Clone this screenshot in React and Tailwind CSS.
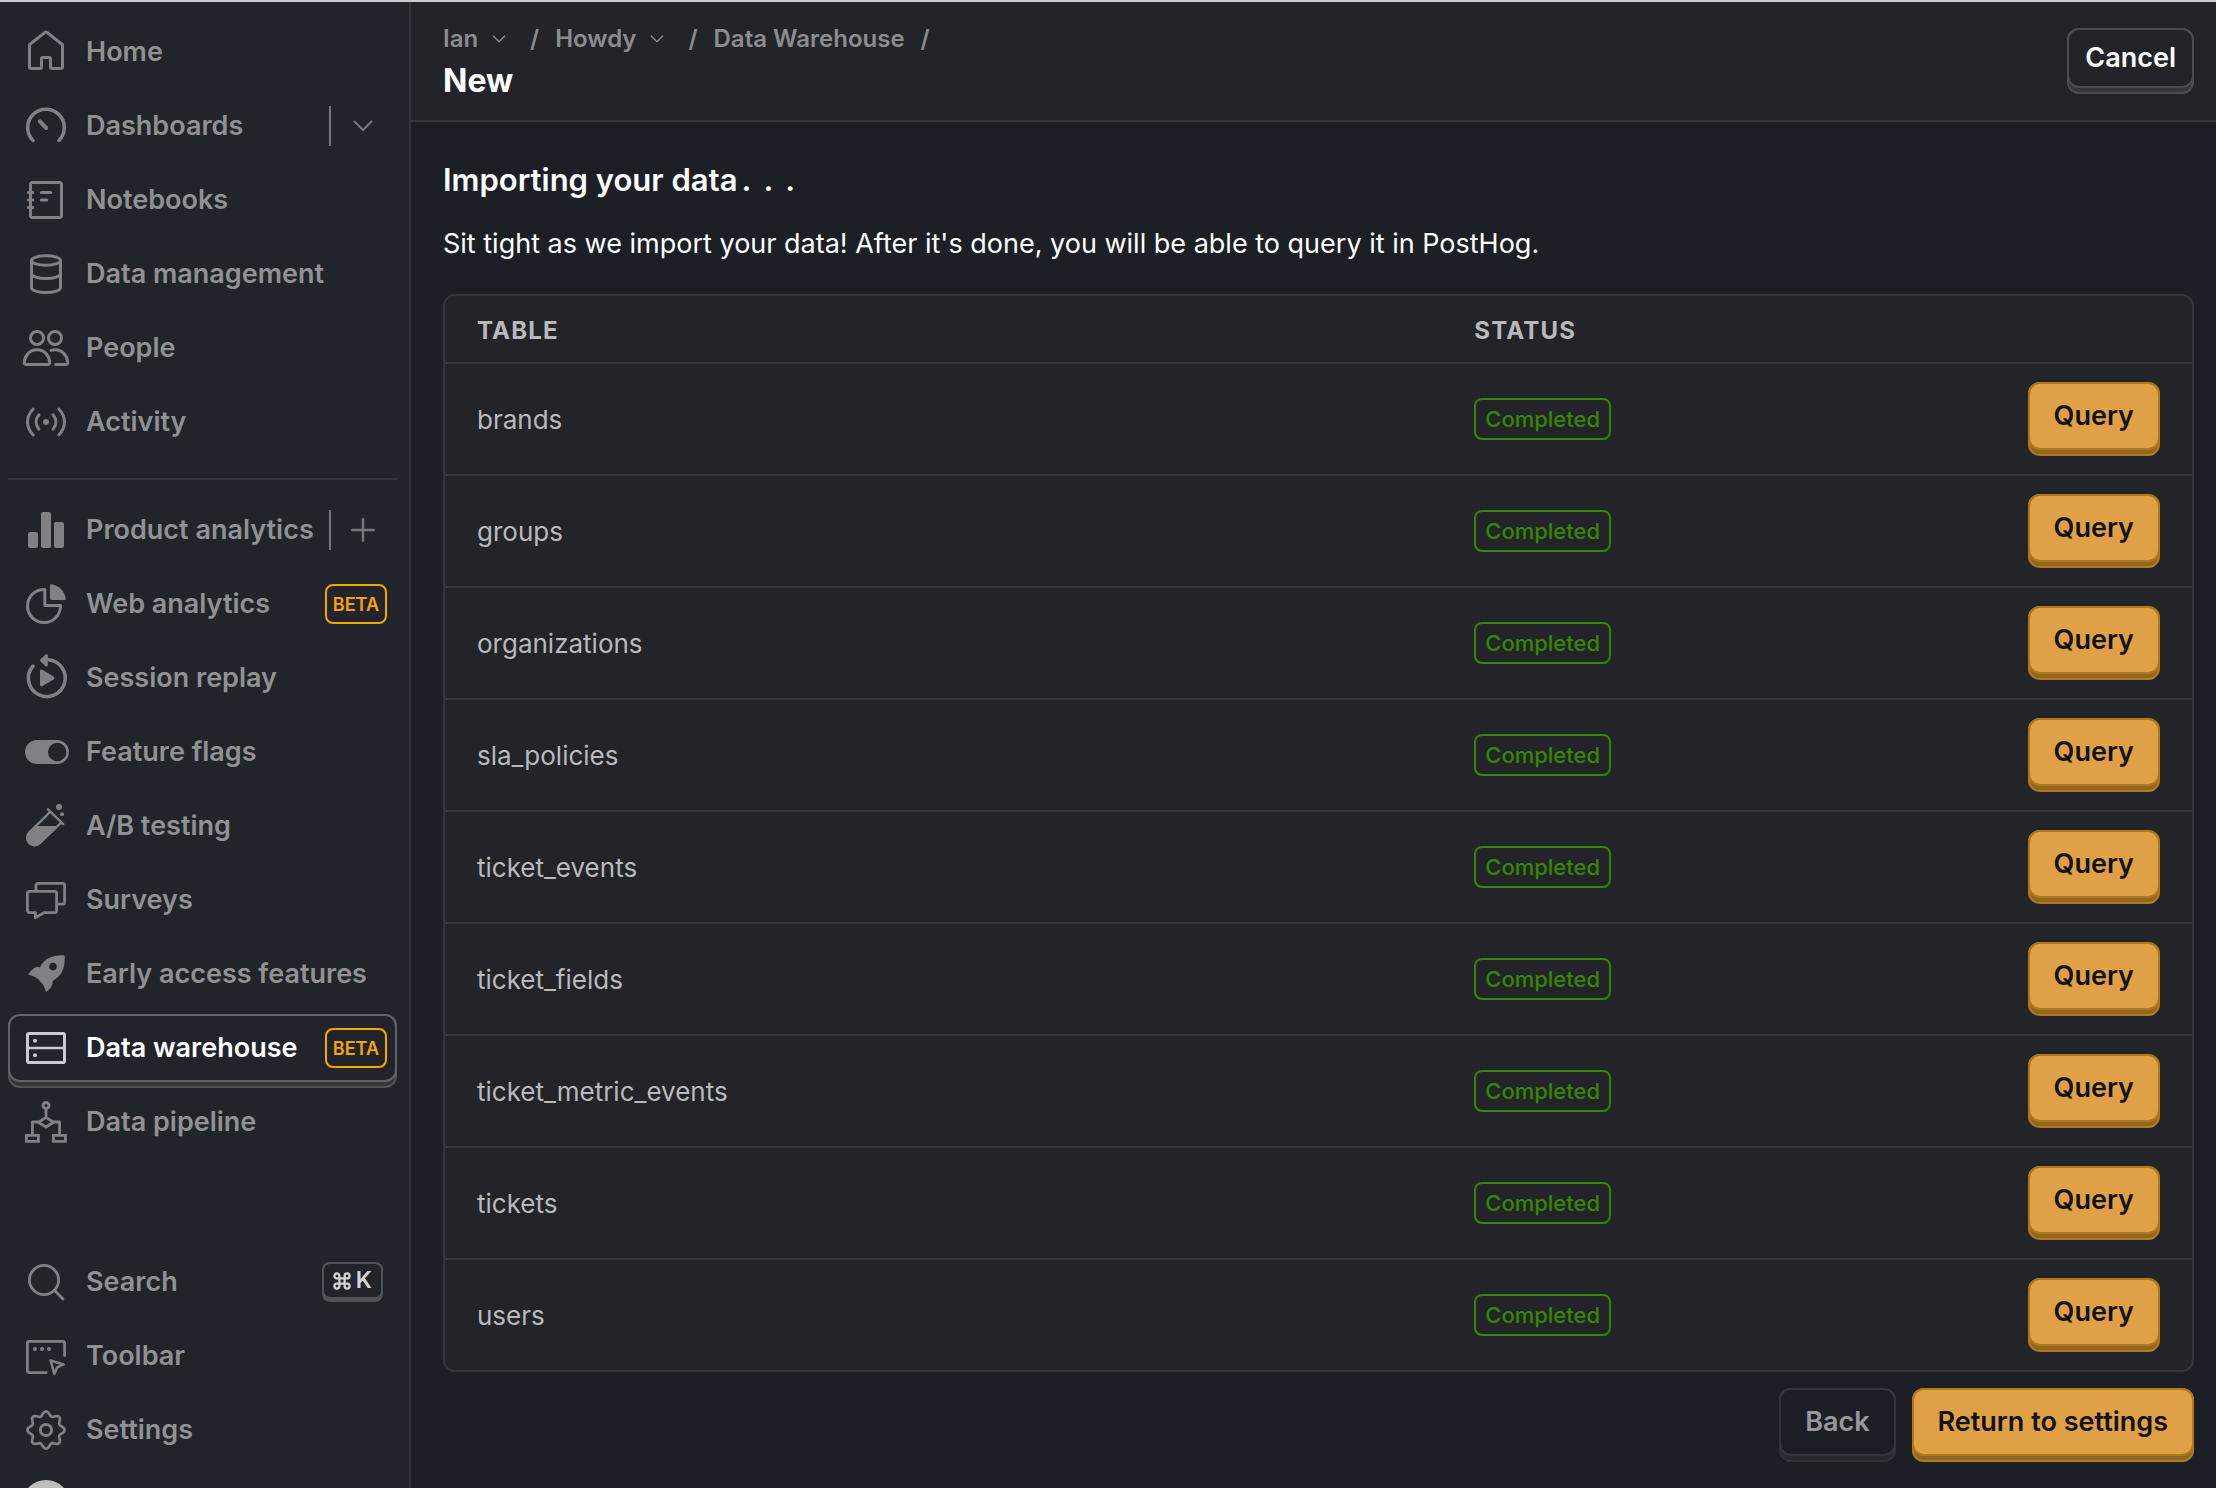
import React from "react";

const line = {
  fill: "none",
  stroke: "currentColor",
  strokeWidth: 1.5,
  strokeLinecap: "round",
  strokeLinejoin: "round",
};

const solid = { fill: "currentColor", stroke: "none" };

function gearPath() {
  const points = [];
  for (let i = 0; i < 96; i++) {
    const a = (i / 96) * Math.PI * 2;
    const r = 8.25 + 1.05 * Math.cos(8 * a);
    points.push(`${(12 + r * Math.sin(a)).toFixed(2)} ${(12 - r * Math.cos(a)).toFixed(2)}`);
  }
  return `M${points.join("L")}Z`;
}

const icons = {
  home: (
    <path d="M11.5 2.2a.8.8 0 0 1 1 0L20 8.1a.8.8 0 0 1 .25.6v10.8a.75.75 0 0 1-.75.75H15a.75.75 0 0 1-.75-.75v-4a.75.75 0 0 0-.75-.75h-3a.75.75 0 0 0-.75.75v4a.75.75 0 0 1-.75.75H4.500a.75.75 0 0 1-.75-.75V8.700a.8.8 0 0 1 .25-.6z" />
  ),
  dashboards: (
    <g strokeWidth="1.75">
      <path d="M5.500 19.200A9.150 9.150 0 1 1 18.500 19.200" />
      <path d="M8.900 9.700l3.200 3.300" strokeWidth="2" />
    </g>
  ),
  notebooks: (
    <>
      <rect x="4.250" y="3.250" width="15.500" height="17.500" rx="1" />
      <path d="M3.200 8.200h2.200M3.200 12h2.200M3.200 15.800h2.200M9.600 8.200h4.800M9.600 12h2.800" />
    </>
  ),
  data: (
    <>
      <ellipse cx="12" cy="5.250" rx="7.250" ry="2.400" />
      <path d="M4.750 5.250v13.600c0 1.300 3.200 2.400 7.250 2.400s7.250-1.100 7.250-2.400V5.250M4.750 11.800c0 1.400 3.200 2.500 7.250 2.500s7.250-1.100 7.250-2.500" />
    </>
  ),
  people: (
    <>
      <circle cx="7.500" cy="7" r="3.250" />
      <circle cx="16.500" cy="7" r="3.250" />
      <path d="M7.500 12.900c3.600 0 6 2.700 6.400 6.300.1.600-.3 1-.8 1H1.900c-.5 0-.9-.4-.8-1 .4-3.600 2.800-6.300 6.400-6.300z" />
      <path d="M14.500 13.200c.6-.2 1.300-.3 2-.3 3.600 0 6 2.700 6.400 6.300.1.600-.3 1-.8 1h-5.300" />
    </>
  ),
  activity: (
    <>
      <circle cx="12" cy="12" r="1.500" {...solid} />
      <path d="M8.500 8.400c-1.900 2.200-1.900 5 0 7.200M15.500 8.400c1.900 2.200 1.900 5 0 7.200M5.600 5.500c-3.800 3.900-3.800 9.100 0 13M18.400 5.500c3.800 3.900 3.800 9.100 0 13" />
    </>
  ),
  analytics: (
    <g {...solid}>
      <rect x="3" y="13" width="5" height="8" rx="1" />
      <rect x="9.500" y="3" width="5" height="18" rx="1" />
      <rect x="16" y="8" width="5" height="13" rx="1" />
    </g>
  ),
  pie: (
    <>
      <path d="M11.400 4.750H11A8.250 8.250 0 1 0 19.250 12.800H11.400z" />
      <path d="M14 2.800c0-.5.400-.8.800-.7C18.500 2.700 21.300 5.500 21.900 9.200c.1.400-.3.800-.7.800H14.800a.8.800 0 0 1-.8-.8z" {...solid} />
    </>
  ),
  replay: (
    <>
      <path d="M13 2.900A9.200 9.200 0 1 1 5.500 6" strokeWidth="1.750" />
      <path d="M9.200 3.600a.7.700 0 0 1 0-1L11.800.3c.4-.4 1.100-.1 1.100.5v4.800c0 .6-.7.900-1.100.5z" {...solid} />
      <path d="M9 8.600c0-.6.600-1 1.100-.7l5.700 3.400c.5.300.5 1.100 0 1.400l-5.700 3.400c-.5.300-1.100-.1-1.100-.7z" {...solid} />
    </>
  ),
  flags: (
    <path
      d="M7.500 6h10a6 6 0 0 1 0 12h-10a6 6 0 0 1 0-12zM17.600 7.400a4.600 4.600 0 1 0 0 9.200 4.600 4.600 0 0 0 0-9.200z"
      fillRule="evenodd"
      {...solid}
    />
  ),
  flask: (
    <>
      <path d="M12.900 3.600l7.700 7.500M14.100 4.900L3.700 15.200a3.700 3.700 0 0 0 5.200 5.400L19.600 10.300" strokeWidth="1.200" />
      <path d="M7 12h10.900L9.300 20.900a4.200 4.200 0 0 1-6-6z" {...solid} />
      <circle cx="18.500" cy="2.500" r="1.500" {...solid} />
      <circle cx="20" cy="6.100" r="1" {...solid} />
    </>
  ),
  surveys: (
    <g strokeWidth="1.400">
      <path d="M3.700 7.700h12.600a1 1 0 0 1 1 1v8.600a1 1 0 0 1-1 1h-5.300l-4.300 2.600v-2.600h-3a1 1 0 0 1-1-1V8.700a1 1 0 0 1 1-1z" />
      <path d="M7 7.500V4.700a1 1 0 0 1 1-1h12.300a1 1 0 0 1 1 1v8.400a1 1 0 0 1-1 1h-2.600" />
    </g>
  ),
  rocket: (
    <path
      d="M21.300 2.700c.3 4.200-.6 8.500-3.300 10.800l-2.700 2.100c.3 2.100-1.200 3.900-3.400 5.400-.4-2-1.100-3.600-2-4.300-1.800-2.700-3.300-3.600-6.900-4.500C5 9.800 6.300 8 9 8.600c2-4.400 6.600-6.300 12.300-5.900zM15.500 6.400a1.900 1.900 0 1 0 0 3.800 1.900 1.900 0 0 0 0-3.800z"
      fillRule="evenodd"
      {...solid}
    />
  ),
  warehouse: (
    <>
      <rect x="2.750" y="4.750" width="18.500" height="14.500" rx="0.800" />
      <path d="M2.750 12h18.500" strokeWidth="1.200" />
      <circle cx="6.500" cy="8.400" r="1" {...solid} />
      <circle cx="6.500" cy="15.600" r="1" {...solid} />
    </>
  ),
  pipeline: (
    <>
      <circle cx="12" cy="3.700" r="1.500" />
      <path d="M12 5.400v4M12 9.700l3.800 2.400-3.800 2.400-3.800-2.400zM8 12H5.200v6M16 12h2.800v6" strokeWidth="1.400" />
      <path d="M2.200 18.700h6v3h-6zM15.700 18.700h6v3h-6z" strokeWidth="1.400" strokeLinejoin="miter" />
    </>
  ),
  search: (
    <>
      <circle cx="11" cy="11" r="7.300" strokeWidth="1.400" />
      <path d="M16.300 16.300l4.200 4.200" strokeWidth="1.400" />
    </>
  ),
  toolbar: (
    <>
      <path d="M21.300 11.800V5.500a.8.800 0 0 0-.8-.8h-17a.8.800 0 0 0-.8.800v14a.8.800 0 0 0 .8.800h8.600" strokeWidth="1.400" />
      <path d="M14.300 14.200l6.500 2-3.200 1.500-1.400 3.200z" strokeWidth="1.300" />
      <circle cx="6.500" cy="8.500" r="1" {...solid} />
      <circle cx="10" cy="8.500" r="1" {...solid} />
      <circle cx="13.500" cy="8.500" r="1" {...solid} />
    </>
  ),
  settings: (
    <>
      <path d={gearPath()} strokeWidth="1.350" />
      <circle cx="12" cy="12" r="2.800" />
    </>
  ),
};

function Icon({ name, className }) {
  return (
    <svg viewBox="0 0 24 24" className={`size-12 shrink-0 overflow-visible ${className}`} aria-hidden="true" {...line}>
      {icons[name]}
    </svg>
  );
}

function Chevron({ className }) {
  return (
    <svg viewBox="0 0 20 12" className={className} aria-hidden="true" {...line} strokeWidth="2">
      <path d="M1.500 1.500L10 10l8.500-8.500" />
    </svg>
  );
}

function Plus() {
  return (
    <svg viewBox="0 0 24 24" className="size-6" aria-hidden="true" {...line} strokeWidth="2.500">
      <path d="M12 1.300v21.400M1.300 12h21.400" />
    </svg>
  );
}

function BetaTag() {
  return (
    <span className="flex h-10 items-center rounded-lg border-2 border-[#f7a501] px-[6px] text-[18px] font-semibold text-[#f7a501]">
      BETA
    </span>
  );
}

function NavItem({ icon, label, beta, active, action, actionLabel, shortcut }) {
  return (
    <li
      className={
        active
          ? "flex h-[74px] rounded-xl bg-[#36373b] pb-[6px] shadow-[inset_0_0_0_2px_#515256]"
          : "flex h-[74px] pb-[6px]"
      }
    >
      <div
        className={
          active
            ? "flex grow items-center rounded-xl border-2 border-[#626367] bg-[#22242c] pr-2"
            : "flex grow items-center border-2 border-transparent pr-2"
        }
      >
        <a
          href="#"
          aria-current={active ? "page" : undefined}
          className={
            active
              ? "flex grow items-center gap-4 pl-3 text-[27px] font-semibold whitespace-nowrap text-white"
              : "flex grow items-center gap-4 pl-3 text-[27px] font-semibold whitespace-nowrap text-[#919194]"
          }
        >
          <Icon name={icon} className={active ? "text-[#c9cbd0]" : "text-[#808085]"} />
          {label}
        </a>
        {beta && <BetaTag />}
        {shortcut && (
          <kbd className="mr-1 flex h-10 rounded-lg bg-[#515256] pb-[3px] font-[Inter,sans-serif]">
            <span className="flex items-center gap-[5px] rounded-lg border-2 border-[#515256] bg-[#22242c] px-[9px] text-[23px] font-semibold text-[#d3d3d6]">
              <svg viewBox="0 0 24 24" className="size-[18px]" aria-hidden="true" {...line} strokeWidth="3">
                <path d="M8.500 8.500h7v7h-7zM8.500 8.500H5.500a3.300 3.300 0 1 1 3-3.300zM15.500 8.500V5.200a3.300 3.300 0 1 1 3.300 3.300zM15.500 15.500h3.300a3.300 3.300 0 1 1-3.300 3.300zM8.500 15.500v3.300a3.300 3.300 0 1 1-3.300-3.300z" />
              </svg>
              K
            </span>
          </kbd>
        )}
        {action && (
          <div className="flex items-center">
            <span className="h-10 w-[2px] bg-[#77777b]" />
            <button type="button" aria-label={actionLabel} className="flex h-10 w-14 items-center justify-center pl-2 text-[#77777b]">
              {action}
            </button>
          </div>
        )}
      </div>
    </li>
  );
}

function PrimaryButton({ children }) {
  return (
    <button
      type="button"
      className="inline-flex h-[74px] rounded-xl bg-[#8e6629] pb-[6px] text-[27px] font-semibold text-[#111111] shadow-[inset_0_0_0_2px_#b17816]"
    >
      <span className="flex h-full items-center rounded-xl border-2 border-[#b17816] bg-[#e0a045] px-6 whitespace-nowrap">
        {children}
      </span>
    </button>
  );
}

const tables = [
  "brands",
  "groups",
  "organizations",
  "sla_policies",
  "ticket_events",
  "ticket_fields",
  "ticket_metric_events",
  "tickets",
  "users",
];

export default function App() {
  return (
    <div className="flex h-screen flex-col overflow-hidden border-t-2 border-[#c9ccd1] bg-[#1d1f27] font-[Inter,sans-serif] text-white">
      <div className="flex min-h-0 grow">
        <nav className="w-[411px] shrink-0 overflow-hidden border-r-2 border-[#35363b] bg-[#22242c] pt-4 pr-3 pl-2">
          <ul>
            <NavItem icon="home" label="Home" />
            <NavItem
              icon="dashboards"
              label="Dashboards"
              actionLabel="Pinned dashboards"
              action={<Chevron className="h-3 w-5" />}
            />
            <NavItem icon="notebooks" label="Notebooks" />
            <NavItem icon="data" label="Data management" />
            <NavItem icon="people" label="People" />
            <NavItem icon="activity" label="Activity" />
          </ul>
          <hr className="mt-4 mb-4 border-t-2 border-[#35363b]" />
          <ul>
            <NavItem icon="analytics" label="Product analytics" actionLabel="New insight" action={<Plus />} />
            <NavItem icon="pie" label="Web analytics" beta />
            <NavItem icon="replay" label="Session replay" />
            <NavItem icon="flags" label="Feature flags" />
            <NavItem icon="flask" label="A/B testing" />
            <NavItem icon="surveys" label="Surveys" />
            <NavItem icon="rocket" label="Early access features" />
            <NavItem icon="warehouse" label="Data warehouse" beta active />
            <NavItem icon="pipeline" label="Data pipeline" />
          </ul>
          <ul className="mt-[86px]">
            <NavItem icon="search" label="Search" shortcut />
            <NavItem icon="toolbar" label="Toolbar" />
            <NavItem icon="settings" label="Settings" />
          </ul>
          <div className="mt-[10px] ml-[14px] size-12 rounded-full bg-[#bdbdbf]" />
        </nav>

        <div className="min-w-0 grow">
          <header className="flex h-[120px] items-center justify-between border-b-2 border-[#35363b] bg-[#232429] pr-[22px] pl-8">
            <div>
              <nav aria-label="Breadcrumb" className="text-[24px] leading-9 font-semibold text-[#8c8c8f]">
                <ol className="flex items-center">
                  <li className="flex items-center">
                    <button type="button" className="flex items-center gap-[14px]">
                      Ian
                      <Chevron className="h-[8px] w-[14px]" />
                    </button>
                    <span className="pr-4 pl-6">/</span>
                  </li>
                  <li className="flex items-center">
                    <button type="button" className="flex items-center gap-[14px]">
                      Howdy
                      <Chevron className="h-[8px] w-[14px]" />
                    </button>
                    <span className="pr-4 pl-6">/</span>
                  </li>
                  <li className="flex items-center">
                    <a href="#">Data Warehouse</a>
                    <span className="pl-4">/</span>
                  </li>
                </ol>
              </nav>
              <h1 className="mt-1 text-[32px] leading-10 font-bold">New</h1>
            </div>
            <button
              type="button"
              className="flex h-[66px] rounded-xl bg-[#36373b] pb-[6px] text-[27px] font-semibold shadow-[inset_0_0_0_2px_#4b4c50]"
            >
              <span className="flex h-full items-center rounded-xl border-2 border-[#4b4c50] bg-[#232429] px-4">Cancel</span>
            </button>
          </header>

          <main className="pr-[22px] pl-8">
            <h2 className="flex gap-1 pt-[38px] text-[31px] leading-10 font-semibold">
              Importing your data
              <span className="flex gap-3">
                <span>.</span>
                <span>.</span>
                <span>.</span>
              </span>
            </h2>
            <p className="mt-6 text-[27px] leading-10">
              Sit tight as we import your data! After it's done, you will be able to query it in PostHog.
            </p>

            <div className="mt-[30px] overflow-hidden rounded-xl border-2 border-[#35363b] bg-[#232429]">
              <table className="w-full table-fixed border-separate border-spacing-0 text-left text-[#b9b9bb]">
                <thead>
                  <tr className="h-[66px]">
                    <th scope="col" className="w-[58%] pt-1 pl-8 text-[24px] font-bold tracking-wider">TABLE</th>
                    <th scope="col" className="pt-1 pl-4 text-[24px] font-bold tracking-wider">STATUS</th>
                    <th scope="col" aria-label="Actions" />
                  </tr>
                </thead>
                <tbody>
                  {tables.map((name) => (
                    <tr key={name} className="h-28">
                      <td className="border-t-2 border-[#35363b] pl-8 text-[26px]">{name}</td>
                      <td className="border-t-2 border-[#35363b] pl-4">
                        <span className="inline-flex h-[42px] items-center rounded-lg border-2 border-[#388600] px-[9px] align-middle text-[22px] font-medium text-[#388600]">
                          Completed
                        </span>
                      </td>
                      <td className="border-t-2 border-[#35363b] pr-8 text-right">
                        <div className="flex justify-end">
                          <PrimaryButton>Query</PrimaryButton>
                        </div>
                      </td>
                    </tr>
                  ))}
                </tbody>
              </table>
            </div>

            <div className="mt-4 flex justify-end gap-4">
              <button
                type="button"
                className="flex h-[74px] rounded-xl bg-[#282a30] pb-[6px] text-[27px] font-semibold text-[#98989b] shadow-[inset_0_0_0_2px_#313338]"
              >
                <span className="flex h-full items-center rounded-xl border-2 border-[#35363b] bg-[#1d1f27] px-6">Back</span>
              </button>
              <PrimaryButton>Return to settings</PrimaryButton>
            </div>
          </main>
        </div>
      </div>
    </div>
  );
}
